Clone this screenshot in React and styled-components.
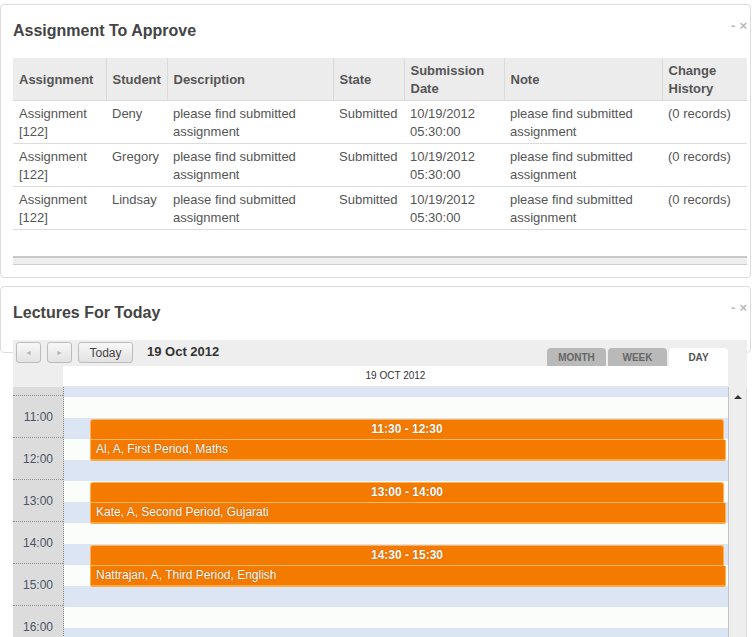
import styled, { createGlobalStyle } from "styled-components";

const GlobalStyle = createGlobalStyle`
  html, body {
    margin: 0;
    padding: 0;
    background: #fff;
    overflow: hidden;
  }
  body {
    font-family: "Liberation Sans", Arial, sans-serif;
    color: #555;
  }
`;

const rows = [
  { student: "Deny" },
  { student: "Gregory" },
  { student: "Lindsay" },
];

const lectures = [
  { top: 32, time: "11:30 - 12:30", text: "Al, A, First Period, Maths" },
  { top: 95, time: "13:00 - 14:00", text: "Kate, A, Second Period, Gujarati" },
  { top: 158, time: "14:30 - 15:30", text: "Nattrajan, A, Third Period, English" },
];

const hours = ["11:00", "12:00", "13:00", "14:00", "15:00", "16:00"];

const App = () => {
  return (
    <Page>
      <GlobalStyle />
      <Panel>
        <PanelHead>
          <Title>Assignment To Approve</Title>
          <Controls>
            <span>-</span>
            <span>×</span>
          </Controls>
        </PanelHead>
        <Table>
          <colgroup>
            <col style={{ width: 93 }} />
            <col style={{ width: 61 }} />
            <col style={{ width: 166 }} />
            <col style={{ width: 71 }} />
            <col style={{ width: 100 }} />
            <col style={{ width: 158 }} />
            <col style={{ width: 85 }} />
          </colgroup>
          <thead>
            <tr>
              <Th>Assignment</Th>
              <Th>Student</Th>
              <Th>Description</Th>
              <Th>State</Th>
              <Th>Submission Date</Th>
              <Th>Note</Th>
              <Th>Change History</Th>
            </tr>
          </thead>
          <tbody>
            {rows.map((r) => (
              <tr key={r.student}>
                <Td>Assignment [122]</Td>
                <Td>{r.student}</Td>
                <Td>please find submitted assignment</Td>
                <Td>Submitted</Td>
                <Td>10/19/2012 05:30:00</Td>
                <Td>please find submitted assignment</Td>
                <Td>(0 records)</Td>
              </tr>
            ))}
          </tbody>
        </Table>
        <ScrollTrack />
      </Panel>

      <Panel $short>
        <PanelHead>
          <Title>Lectures For Today</Title>
          <Controls>
            <span>-</span>
            <span>×</span>
          </Controls>
        </PanelHead>
      </Panel>

      <Calendar>
        <Toolbar>
          <NavButton>◄</NavButton>
          <NavButton>►</NavButton>
          <TodayButton>Today</TodayButton>
          <DateTitle>19 Oct 2012</DateTitle>
          <Tabs>
            <Tab>MONTH</Tab>
            <Tab>WEEK</Tab>
            <Tab $active>DAY</Tab>
          </Tabs>
        </Toolbar>
        <HeadRow>
          <Corner $w={50} />
          <DayHead>19 OCT 2012</DayHead>
          <Corner $w={19} />
        </HeadRow>
        <Body>
          <TimeCol>
            <TimeSlot $h={8} />
            {hours.map((h) => (
              <TimeSlot key={h} $h={41}>
                {h}
              </TimeSlot>
            ))}
          </TimeCol>
          <Grid>
            {lectures.map((l) => (
              <Event key={l.time} style={{ top: l.top }}>
                <EventHead>{l.time}</EventHead>
                <EventBody>{l.text}</EventBody>
              </Event>
            ))}
          </Grid>
          <ScrollBar>
            <ScrollArrow />
          </ScrollBar>
        </Body>
      </Calendar>
    </Page>
  );
};

const Page = styled.div`
  padding-top: 4px;
`;

const Panel = styled.section`
  width: 751px;
  box-sizing: border-box;
  border: 1px solid #dcdcdc;
  border-radius: 4px;
  padding: 0 3px 12px 12px;
  background: #fff;
  margin-bottom: 8px;
  height: ${(p) => (p.$short ? "67px" : "auto")};
`;

const PanelHead = styled.div`
  display: flex;
  justify-content: space-between;
  align-items: flex-start;
  padding-top: 16px;
  height: 37px;
`;

const Title = styled.h2`
  margin: 0;
  font-size: 16px;
  line-height: 20px;
  font-weight: bold;
  color: #444;
`;

const Controls = styled.div`
  display: flex;
  gap: 4px;
  font-size: 13px;
  line-height: 10px;
  font-weight: bold;
  color: #b8b8b8;
`;

const Table = styled.table`
  width: 734px;
  table-layout: fixed;
  border-collapse: collapse;
  font-size: 13px;
  line-height: 18px;
`;

const Th = styled.th`
  background: #ececec;
  color: #555;
  font-weight: bold;
  text-align: left;
  vertical-align: middle;
  padding: 4px 6px 2px;
  height: 36px;
  border-left: 1px solid #dadada;
  border-bottom: 1px solid #dadada;
  &:first-child {
    border-left: none;
  }
`;

const Td = styled.td`
  color: #555;
  vertical-align: top;
  padding: 4px 6px 2px;
  border-bottom: 1px solid #dcdcdc;
`;

const ScrollTrack = styled.div`
  margin-top: 26px;
  width: 734px;
  height: 6px;
  background: #eee;
  border-top: 2px solid #c8c8c8;
  border-bottom: 1px solid #cfcfcf;
`;

const Calendar = styled.div`
  position: relative;
  z-index: 1;
  margin: -21px 0 0 13px;
  width: 734px;
  font-family: "Liberation Sans", Arial, sans-serif;
`;

const Toolbar = styled.div`
  display: flex;
  align-items: flex-start;
  height: 26px;
  box-sizing: border-box;
  padding: 2px 19px 0 3px;
  background: #eee;
`;

const ButtonBase = styled.div`
  box-sizing: border-box;
  height: 21px;
  border: 1px solid #bcbcbc;
  border-radius: 3px;
  background: linear-gradient(#f8f8f8, #e2e2e2);
  display: flex;
  align-items: center;
  justify-content: center;
  margin-right: 6px;
`;

const NavButton = styled(ButtonBase)`
  width: 25px;
  font-size: 7px;
  color: #b5b5b5;
`;

const TodayButton = styled(ButtonBase)`
  width: 55px;
  font-size: 12px;
  color: #444;
`;

const DateTitle = styled.div`
  margin-left: 8px;
  font-size: 13px;
  font-weight: bold;
  line-height: 20px;
  color: #333;
`;

const Tabs = styled.div`
  margin-left: auto;
  align-self: flex-end;
  display: flex;
  gap: 2px;
`;

const Tab = styled.div`
  width: 59px;
  height: 18px;
  border-radius: 4px 4px 0 0;
  background: ${(p) => (p.$active ? "#fff" : "#b9b9b9")};
  color: ${(p) => (p.$active ? "#555" : "#666")};
  font-size: 10px;
  font-weight: bold;
  line-height: 19px;
  text-align: center;
`;

const HeadRow = styled.div`
  display: flex;
  height: 21px;
`;

const Corner = styled.div`
  width: ${(p) => p.$w}px;
  background: #eee;
`;

const DayHead = styled.div`
  flex: 1;
  background: #fff;
  border-radius: 4px 0 0 0;
  font-size: 10px;
  line-height: 19px;
  text-align: center;
  color: #333;
  border-bottom: 1px solid #e3e3e3;
  box-sizing: border-box;
`;

const Body = styled.div`
  display: flex;
  height: 251px;
  overflow: hidden;
`;

const TimeCol = styled.div`
  width: 51px;
  box-sizing: border-box;
  background: #dcdcdc;
  border-right: 1px dotted #8a8a8a;
  flex-shrink: 0;
`;

const TimeSlot = styled.div`
  height: ${(p) => p.$h}px;
  border-bottom: 1px dotted #8a8a8a;
  display: flex;
  align-items: center;
  justify-content: flex-end;
  padding-right: 10px;
  font-size: 12px;
  color: #4a5468;
`;

const Grid = styled.div`
  position: relative;
  width: 665px;
  box-sizing: border-box;
  border-right: 1px solid #c6c6c6;
  background: repeating-linear-gradient(
    to bottom,
    #fbfdfa 0px,
    #fbfdfa 21px,
    #dce5f3 21px,
    #dce5f3 42px
  );
  background-position: 0 10px;
  flex-shrink: 0;
`;

const Event = styled.div`
  position: absolute;
  left: 26px;
  right: 4px;
  color: #fff;
  text-shadow: 0 0 1px rgba(130, 50, 0, 0.7);
`;

const EventHead = styled.div`
  height: 21px;
  box-sizing: border-box;
  background: #f47b00;
  border: 1px solid #fbb257;
  border-bottom-color: #fcb866;
  border-radius: 3px 3px 0 0;
  font-size: 12px;
  font-weight: bold;
  line-height: 19px;
  text-align: center;
`;

const EventBody = styled.div`
  height: 21px;
  box-sizing: border-box;
  margin-right: -2px;
  background: #f47b00;
  border: 1px solid #fbb257;
  border-top: none;
  border-bottom: 2px solid #fba940;
  border-radius: 0 0 2px 2px;
  padding-left: 5px;
  font-size: 12px;
  line-height: 18px;
`;

const ScrollBar = styled.div`
  width: 18px;
  box-sizing: border-box;
  background: #eee;
  border-right: 1px solid #dcdcdc;
  display: flex;
  justify-content: center;
  padding-top: 8px;
`;

const ScrollArrow = styled.div`
  width: 0;
  height: 0;
  border-left: 4px solid transparent;
  border-right: 4px solid transparent;
  border-bottom: 4px solid #333;
`;

export default App;
